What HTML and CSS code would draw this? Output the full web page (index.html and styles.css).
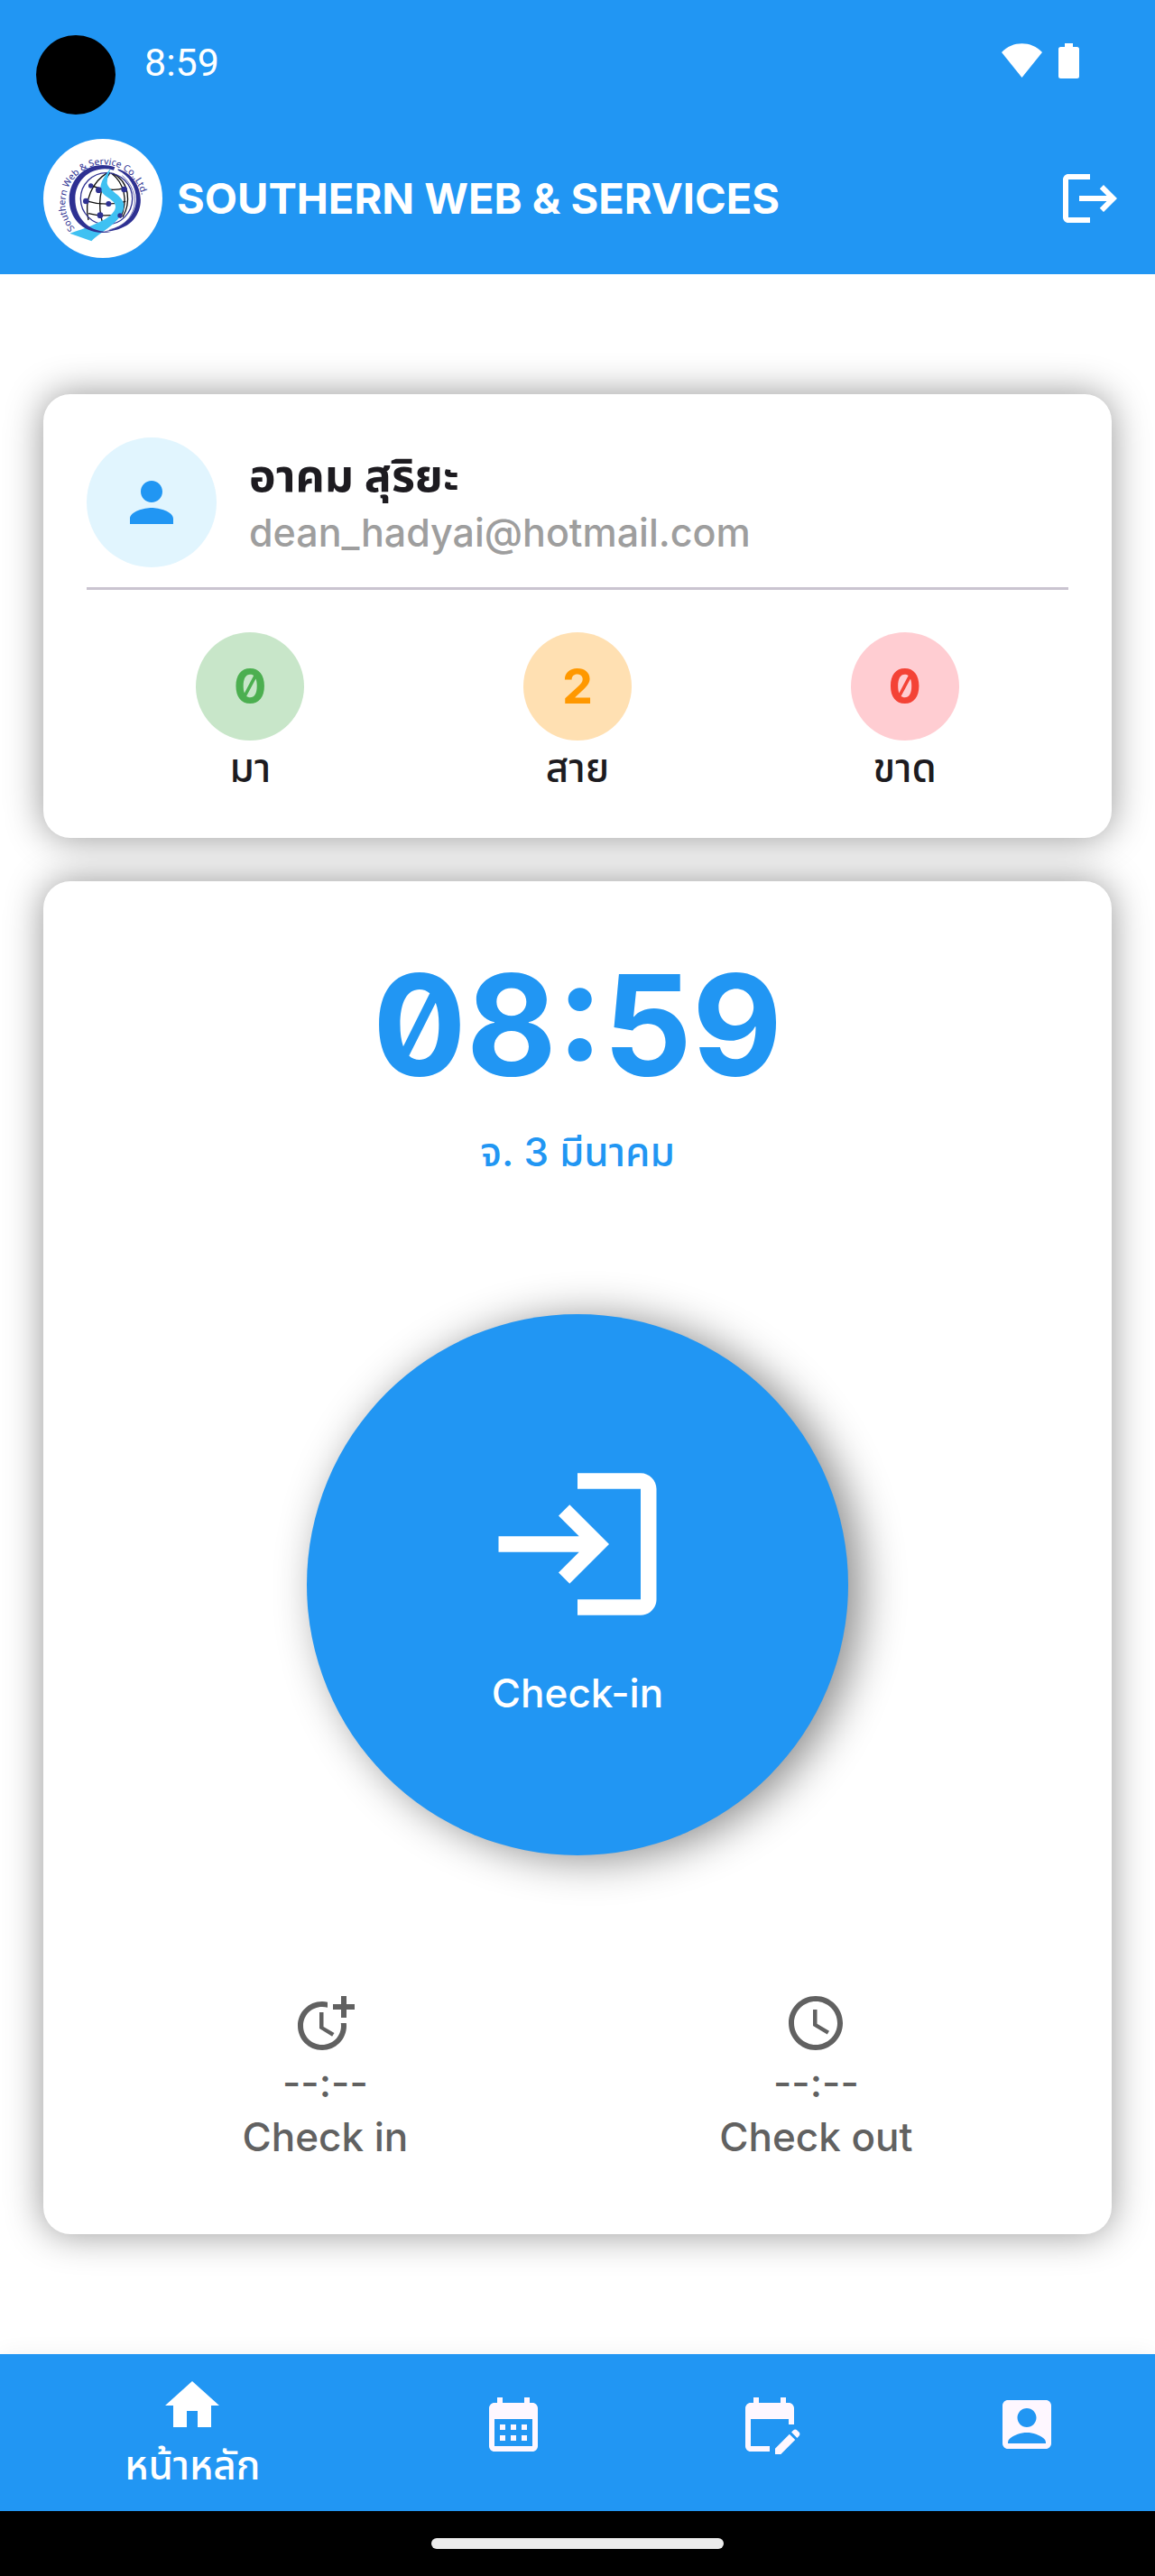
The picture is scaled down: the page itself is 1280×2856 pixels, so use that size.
FILE: index.html
```html
<!DOCTYPE html>
<html lang="th">
<head>
<meta charset="utf-8">
<meta name="viewport" content="width=device-width, initial-scale=1">
<title>Southern Web &amp; Services</title>
<link rel="stylesheet" href="styles.css">
</head>
<body>
<div class="screen">
  <header class="top">
    <div class="status">
      <span class="camera"></span>
      <time class="status-time">8:59</time>
      <svg class="wifi" viewBox="0 0 45 38" aria-hidden="true"><path d="M0 10C12-3 33-3 45 10L22.500 38z"/></svg>
      <svg class="battery" viewBox="0 0 23 39" aria-hidden="true"><path d="M7 0h9v4h4.500a2.500 2.500 0 0 1 2.500 2.500v30a2.500 2.500 0 0 1-2.500 2.500h-18A2.500 2.500 0 0 1 0 36.500v-30A2.500 2.500 0 0 1 2.500 4H7z"/></svg>
    </div>
    <div class="appbar">
      <svg class="logo" viewBox="0 0 396 396" role="img" aria-label="Southern Web &amp; Service Co.,Ltd.">
        <circle cx="198" cy="198" r="198" fill="#fff"/>
        <g fill="none" stroke="#111" stroke-width="4">
          <path d="M214 112c-50 30-80 90-64 158M222 112c-36 50-42 110-24 172M226 114c40 30 60 90 30 148M230 114c60 30 60 100 34 146M158 154c30 14 80 20 110 10M140 206c40 12 90 14 134 2M150 248c30 8 70 8 104 2"/>
        </g>
        <circle cx="210" cy="199" r="86" fill="none" stroke="#2e3192" stroke-width="4"/>
        <path d="M224 98c-18 20-34 44-34 66 2 28 48 34 50 60 0 34-60 60-152 90l72 26c30-34 106-62 108-118 0-34-54-50-56-76 0-16 6-32 12-48z" fill="#3fc1f2"/>
        <path d="M238 94C160 68 88 120 86 200c0 82 74 126 142 108-60 8-122-34-122-108 0-68 60-114 128-96z" fill="#2e3192"/>
        <path d="M248 104c84 40 92 180-48 204 160-2 152-178 48-208z" fill="#2e3192"/>
        <path d="M262 122c70 60 50 160-42 180" fill="none" stroke="#2e3192" stroke-width="2"/>
        <g fill="#2e3192"><circle cx="158" cy="156" r="8"/><circle cx="184" cy="170" r="10"/><circle cx="269" cy="168" r="10"/><circle cx="142" cy="207" r="10"/><circle cx="217" cy="216" r="9"/><circle cx="189" cy="254" r="10"/><circle cx="255" cy="255" r="8"/></g>
        <path id="logo-arc" d="M105 298A128 128 0 1 1 329 214" fill="none"/>
        <text class="logo-text"><textPath href="#logo-arc">Southern Web &amp; Service Co.,Ltd.</textPath></text>
      </svg>
      <h1 class="title">SOUTHERN WEB &amp; SERVICES</h1>
      <button class="icon-button" type="button" aria-label="Log out">
        <svg class="icon" viewBox="0 0 24 24"><path d="M17 7l-1.410 1.410L18.170 11H8v2h10.170l-2.580 2.580L17 17l5-5zM4 5h8V3H4c-1.100 0-2 .9-2 2v14c0 1.100.9 2 2 2h8v-2H4V5z"/></svg>
      </button>
    </div>
  </header>

  <main class="content">
    <section class="card profile">
      <div class="person">
        <span class="avatar"><svg class="icon" viewBox="0 0 24 24" aria-hidden="true"><path d="M12 12c2.210 0 4-1.790 4-4s-1.790-4-4-4-4 1.790-4 4 1.790 4 4 4zm0 2c-2.670 0-8 1.340-8 4v2h16v-2c0-2.660-5.330-4-8-4z"/></svg></span>
        <div class="identity">
          <h2 class="name">อาคม สุริยะ</h2>
          <p class="email">dean_hadyai@hotmail.com</p>
        </div>
      </div>
      <ul class="stats">
        <li class="stat"><span class="count present">0</span><span>มา</span></li>
        <li class="stat"><span class="count late">2</span><span>สาย</span></li>
        <li class="stat"><span class="count absent">0</span><span>ขาด</span></li>
      </ul>
    </section>

    <section class="card clock">
      <time class="now">08:59</time>
      <p class="date">จ. 3 มีนาคม</p>
      <button class="punch" type="button">
        <svg class="punch-icon" viewBox="0 0 24 24" aria-hidden="true"><path d="M11 7L9.600 8.400l2.600 2.600H2v2h10.200l-2.600 2.600L11 17l5-5-5-5zm9 12h-8v2h8c1.100 0 2-.9 2-2V5c0-1.100-.9-2-2-2h-8v2h8v14z"/></svg>
        <span>Check-in</span>
      </button>
      <div class="records">
        <div class="record">
          <svg class="icon" viewBox="0 0 24 24" aria-hidden="true"><path d="M10 8v6l4.700 2.900.8-1.200-4-2.400V8z"/><path d="M17.920 12c.05.33.08.66.08 1 0 3.900-3.100 7-7 7s-7-3.100-7-7 3.100-7 7-7c.7 0 1.370.1 2 .29V4.230c-.64-.15-1.310-.23-2-.23-5 0-9 4-9 9s4 9 9 9 9-4 9-9c0-.34-.02-.67-.06-1h-2.020z"/><path d="M20 5V2h-2v3h-3v2h3v3h2V7h3V5z"/></svg>
          <span>--:--</span>
          <span>Check in</span>
        </div>
        <div class="record">
          <svg class="icon" viewBox="0 0 24 24" aria-hidden="true"><path d="M11.990 2C6.470 2 2 6.480 2 12s4.470 10 9.990 10C17.520 22 22 17.520 22 12S17.520 2 11.990 2zM12 20c-4.420 0-8-3.580-8-8s3.580-8 8-8 8 3.580 8 8-3.580 8-8 8zm.5-13H11v6l5.250 3.150.75-1.230-4.500-2.670z"/></svg>
          <span>--:--</span>
          <span>Check out</span>
        </div>
      </div>
    </section>
  </main>

  <nav class="tabs">
    <a class="tab active" href="#home"><svg class="icon" viewBox="0 0 24 24" aria-hidden="true"><path d="M10 20v-6h4v6h5v-8h3L12 3 2 12h3v8z"/></svg><span>หน้าหลัก</span></a>
    <a class="tab" href="#calendar" aria-label="Calendar"><svg class="icon" viewBox="0 0 24 24"><path d="M19 4h-1V2h-2v2H8V2H6v2H5c-1.110 0-1.990.9-1.990 2L3 20c0 1.100.89 2 2 2h14c1.100 0 2-.9 2-2V6c0-1.100-.9-2-2-2zm0 16H5V10h14v10zM9 14H7v-2h2v2zm4 0h-2v-2h2v2zm4 0h-2v-2h2v2zm-8 4H7v-2h2v2zm4 0h-2v-2h2v2zm4 0h-2v-2h2v2z"/></svg></a>
    <a class="tab" href="#requests" aria-label="Requests"><svg class="icon" viewBox="0 0 24 24"><path d="M12 22H5c-1.110 0-2-.9-2-2L3.010 6c0-1.100.88-2 1.990-2h1V2h2v2h8V2h2v2h1c1.100 0 2 .9 2 2v6h-2v-2H5v10h7v2zm10.130-5.010l.71-.71c.39-.39.39-1.020 0-1.410l-.71-.71c-.39-.39-1.020-.39-1.410 0l-.71.71 2.120 2.120zm-.71.71l-5.300 5.300H14v-2.120l5.300-5.300 2.120 2.120z"/></svg></a>
    <a class="tab" href="#account" aria-label="Account"><svg class="icon" viewBox="0 0 24 24"><path d="M19 3H5c-1.100 0-2 .9-2 2v14c0 1.100.9 2 2 2h14c1.100 0 2-.9 2-2V5c0-1.100-.9-2-2-2zm-7 3c1.930 0 3.500 1.570 3.500 3.500S13.930 13 12 13s-3.500-1.570-3.500-3.500S10.070 6 12 6zm7 13H5v-.23c0-.62.28-1.200.76-1.580C7.470 15.820 9.640 15 12 15s4.530.82 6.240 2.190c.48.38.76.97.76 1.580V19z"/></svg></a>
  </nav>
  <div class="gesture"><span class="pill"></span></div>
</div>
</body>
</html>
```
FILE: styles.css
```css
:root {
  --blue: #2196f3;
  --ink: #1d1b20;
  --soft: #fef7ff;
}

* { box-sizing: border-box; }

body {
  margin: 0;
  background: #fff;
  color: var(--ink);
  font-family: Inter, "Noto Sans Thai", "Noto Sans", sans-serif;
  font-feature-settings: "zero";
  font-size: 44px;
  font-weight: 500;
  line-height: 60px;
}

h1, h2, p, ul { margin: 0; padding: 0; }
button { border: 0; padding: 0; font: inherit; cursor: pointer; }
svg { display: block; flex: none; fill: currentColor; }

.icon { width: 72px; height: 72px; }

.screen {
  display: flex;
  flex-direction: column;
  min-height: 100vh;
}

.top {
  background: var(--blue);
  color: #fff;
  padding-bottom: 18px;
}

.status {
  display: flex;
  align-items: flex-start;
  height: 154px;
  padding: 39px 84px 0 40px;
}

.camera {
  width: 88px;
  height: 88px;
  border-radius: 50%;
  background: #000;
}

.status-time {
  margin-left: 32px;
  margin-right: auto;
  font-family: Roboto, sans-serif;
  font-size: 43px;
  font-weight: 400;
}

.wifi { width: 45px; height: 38px; margin: 9px 18px 0 0; }
.battery { width: 23px; height: 39px; margin-top: 9px; }

.appbar {
  display: flex;
  align-items: center;
  gap: 16px;
  padding: 0 36px 0 48px;
}

.logo { width: 132px; height: 132px; }
.logo-text { font: 400 31px "Noto Sans", sans-serif; fill: #2e3192; }

.title {
  flex: 1;
  font-size: 47px;
  font-weight: 700;
}

.icon-button { background: none; color: inherit; }

.content {
  flex: 1;
  display: flex;
  flex-direction: column;
  justify-content: center;
  gap: 48px;
  padding: 48px;
}

.card {
  background: #fff;
  border-radius: 30px;
  box-shadow: 0 0 42px rgba(0, 0, 0, 0.42);
}

.profile { padding: 48px; }

.person {
  display: flex;
  align-items: center;
  gap: 36px;
  padding-bottom: 22px;
  border-bottom: 3px solid #cac4d0;
}

.avatar {
  display: grid;
  place-items: center;
  width: 144px;
  height: 144px;
  border-radius: 50%;
  background: #e1f5fe;
  color: var(--blue);
}

.name { font-size: 50px; font-weight: 700; line-height: 66px; }
.email { font-size: 43px; color: #9e9e9e; }

.stats {
  display: grid;
  grid-template-columns: repeat(3, 1fr);
  padding-top: 47px;
  list-style: none;
}

.stat { display: flex; flex-direction: column; align-items: center; }

.count {
  display: grid;
  place-items: center;
  width: 120px;
  height: 120px;
  border-radius: 50%;
  font-size: 54px;
  font-weight: 700;
}

.present { background: #c8e6c9; color: #4caf50; }
.late { background: #ffe0b2; color: #ff9800; }
.absent { background: #ffcdd2; color: #f44336; }

.clock {
  display: flex;
  flex-direction: column;
  align-items: center;
  padding: 48px 48px 78px;
  color: var(--blue);
}

.now {
  font-size: 154px;
  font-weight: 700;
  line-height: 222px;
}

.punch {
  display: flex;
  flex-direction: column;
  align-items: center;
  gap: 30px;
  width: 600px;
  height: 600px;
  margin-top: 150px;
  padding-top: 150px;
  border-radius: 50%;
  background: var(--blue);
  box-shadow: 14px 4px 48px rgba(0, 0, 0, 0.46);
  color: #fff;
}

.punch-icon { width: 210px; height: 210px; }

.records {
  display: flex;
  justify-content: space-around;
  align-self: stretch;
  margin-top: 150px;
  color: #616161;
}

.record { display: flex; flex-direction: column; align-items: center; }

.tabs {
  display: grid;
  grid-template-columns: 3fr 2fr 2fr 2fr;
  height: 174px;
  background: var(--blue);
  box-shadow: 0 0 24px rgba(0, 0, 0, 0.06);
  color: var(--soft);
}

.tab {
  display: flex;
  flex-direction: column;
  align-items: center;
  justify-content: center;
  padding-bottom: 18px;
  color: inherit;
  text-decoration: none;
}

.active { padding-bottom: 0; color: #fff; }

.gesture {
  display: grid;
  place-items: center;
  height: 72px;
  background: #000;
}

.pill { width: 324px; height: 12px; border-radius: 6px; background: #ebebeb; }
```
